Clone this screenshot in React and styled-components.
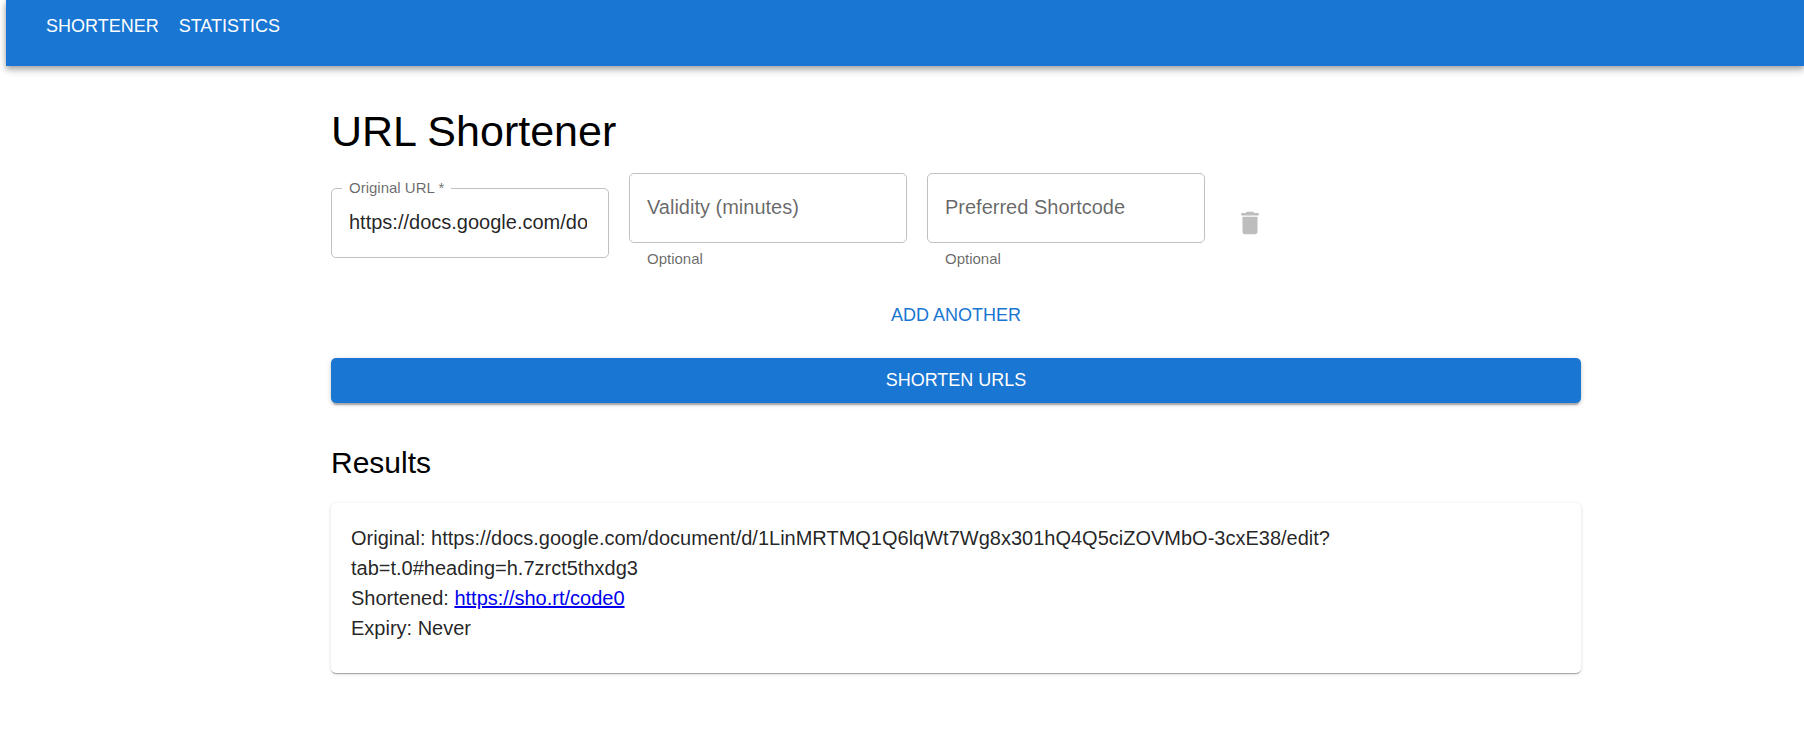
import React, { useState } from "react";
import styled, { createGlobalStyle } from "styled-components";

const GlobalStyle = createGlobalStyle`
  *, *::before, *::after { box-sizing: border-box; }
  body {
    margin: 0;
    background: #fff;
    color: rgba(0, 0, 0, 0.87);
    font-family: "Liberation Sans", Arial, Helvetica, sans-serif;
    font-size: 20px;
    line-height: 30px;
  }
`;

const AppBar = styled.header`
  margin-left: 6px;
  padding: 4px 30px 17px;
  background: #1976d2;
  box-shadow: 0 2px 5px rgba(0, 0, 0, 0.2), 0 5px 6px rgba(0, 0, 0, 0.14),
    0 1px 12px rgba(0, 0, 0, 0.12);
`;

const Nav = styled.nav`
  display: flex;
`;

const NavLink = styled.a`
  padding: 8px 10px;
  color: #fff;
  font-size: 18px;
  line-height: 29px;
  text-decoration: none;
  text-transform: uppercase;
`;

const Main = styled.main`
  display: flex;
  flex-direction: column;
  margin: 39px 223px 40px 331px;
`;

const Title = styled.h1`
  margin: 0 0 16px;
  color: #000;
  font-size: 43px;
  font-weight: 400;
  line-height: 52px;
`;

const Form = styled.form`
  display: flex;
  flex-direction: column;
  gap: 20px;
`;

const UrlRow = styled.div`
  display: flex;
  align-items: center;
  gap: 20px;
  margin-bottom: 1px;
`;

const Field = styled.div`
  position: relative;
  flex: 0 1 278px;
  min-width: 0;
`;

const FieldInput = styled.input`
  display: block;
  width: 100%;
  height: 70px;
  padding: 0 21px 0 17px;
  border: 1px solid #c0c0c0;
  border-radius: 5px;
  background: transparent;
  color: rgba(0, 0, 0, 0.87);
  font: inherit;
`;

const FieldLabel = styled.label`
  position: absolute;
  top: ${(p) => (p.$raised ? "-13px" : "19px")};
  left: ${(p) => (p.$raised ? "11px" : "18px")};
  padding: ${(p) => (p.$raised ? "0 7px" : "0")};
  background: #fff;
  color: rgba(0, 0, 0, 0.6);
  font-size: ${(p) => (p.$raised ? "15px" : "20px")};
  line-height: ${(p) => (p.$raised ? "25px" : "30px")};
  white-space: nowrap;
  pointer-events: none;
`;

const HelperText = styled.p`
  margin: 3px 18px 0;
  padding-bottom: 1px;
  color: rgba(0, 0, 0, 0.6);
  font-size: 15px;
  line-height: 25px;
`;

const IconButton = styled.button`
  display: flex;
  padding: 10px;
  border: 0;
  border-radius: 50%;
  background: transparent;
  color: rgba(0, 0, 0, 0.26);
`;

const Button = styled.button`
  padding: 8px 10px;
  border: 0;
  border-radius: 5px;
  font: inherit;
  font-size: 18px;
  line-height: 29px;
  text-transform: uppercase;
  cursor: pointer;
`;

const TextButton = styled(Button)`
  align-self: center;
  background: transparent;
  color: #1976d2;
`;

const SubmitButton = styled(Button)`
  background: #1976d2;
  color: #fff;
  box-shadow: 0 4px 1px -2px rgba(0, 0, 0, 0.2), 0 2px 3px rgba(0, 0, 0, 0.14),
    0 1px 6px rgba(0, 0, 0, 0.12);
`;

const ResultsTitle = styled.h2`
  margin: 40px 0 20px;
  color: #000;
  font-size: 30px;
  font-weight: 400;
  line-height: 40px;
`;

const ResultCard = styled.article`
  padding: 20px 20px 30px;
  border-radius: 5px;
  background: #fff;
  box-shadow: 0 2px 1px -1px rgba(0, 0, 0, 0.2), 0 1px 1px rgba(0, 0, 0, 0.14),
    0 1px 4px rgba(0, 0, 0, 0.12);
`;

const ResultLine = styled.p`
  margin: 0;
`;

const ResultLink = styled.a`
  color: #0000ee;
  text-decoration: underline;
`;

const LONG_URL =
  "https://docs.google.com/document/d/1LinMRTMQ1Q6lqWt7Wg8x301hQ4Q5ciZOVMbO-3cxE38/edit?tab=t.0#heading=h.7zrct5thxdg3";

function TextField({ id, label, helper, initial = "", required }) {
  const [value, setValue] = useState(initial);
  const [focused, setFocused] = useState(false);
  return (
    <Field>
      <FieldInput
        id={id}
        value={value}
        required={required}
        onChange={(e) => setValue(e.target.value)}
        onFocus={() => setFocused(true)}
        onBlur={() => setFocused(false)}
      />
      <FieldLabel htmlFor={id} $raised={focused || value !== ""}>
        {required ? `${label} *` : label}
      </FieldLabel>
      {helper && <HelperText>{helper}</HelperText>}
    </Field>
  );
}

function TrashIcon() {
  return (
    <svg width="30" height="30" viewBox="0 0 24 24" fill="currentColor" aria-hidden="true">
      <path d="M6 19c0 1.100.9 2 2 2h8c1.100 0 2-.9 2-2V7H6v12zM19 4h-3.500l-1-1h-5l-1 1H5v2h14V4z" />
    </svg>
  );
}

export default function App() {
  return (
    <>
      <GlobalStyle />
      <AppBar>
        <Nav>
          <NavLink href="#shortener">Shortener</NavLink>
          <NavLink href="#statistics">Statistics</NavLink>
        </Nav>
      </AppBar>
      <Main>
        <Title>URL Shortener</Title>
        <Form onSubmit={(e) => e.preventDefault()}>
          <UrlRow>
            <TextField id="url" label="Original URL" initial={LONG_URL} required />
            <TextField id="validity" label="Validity (minutes)" helper="Optional" />
            <TextField id="shortcode" label="Preferred Shortcode" helper="Optional" />
            <IconButton type="button" aria-label="Remove URL" disabled>
              <TrashIcon />
            </IconButton>
          </UrlRow>
          <TextButton type="button">Add another</TextButton>
          <SubmitButton type="submit">Shorten URLs</SubmitButton>
        </Form>
        <ResultsTitle>Results</ResultsTitle>
        <ResultCard>
          <ResultLine>{`Original: ${LONG_URL}`}</ResultLine>
          <ResultLine>
            Shortened: <ResultLink href="#code0">https://sho.rt/code0</ResultLink>
          </ResultLine>
          <ResultLine>Expiry: Never</ResultLine>
        </ResultCard>
      </Main>
    </>
  );
}
